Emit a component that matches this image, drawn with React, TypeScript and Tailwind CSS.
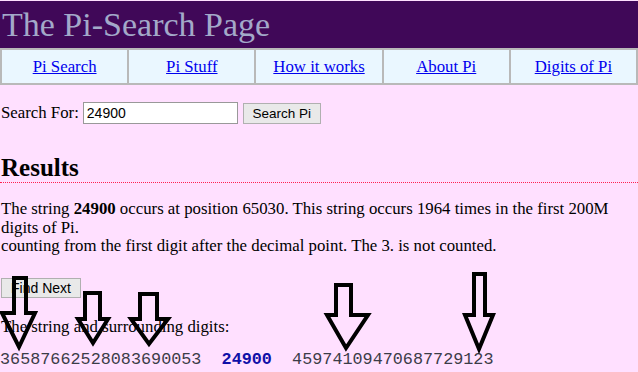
const navLinks = ["Pi Search", "Pi Stuff", "How it works", "About Pi", "Digits of Pi"];

// outlined down arrows drawn over the page: [shaftLeft, shaftRight, top, headY, headLeft, headRight, tipX, tipY]
const arrows: number[][] = [
  [14, 26, 278, 313, 2, 35, 19, 347],
  [85, 100, 293, 319, 78, 108, 93, 343],
  [140, 157, 294, 319, 131, 168, 149, 344],
  [336, 351, 285, 315, 327, 368, 346, 348],
  [474, 485, 274, 315, 465, 493, 479, 349],
];

function arrowPoints(a: number[]) {
  const [x1, x2, y0, y1, h1, h2, tx, ty] = a;
  return `${x1},${y0} ${x2},${y0} ${x2},${y1} ${h2},${y1} ${tx},${ty} ${h1},${y1} ${x1},${y1}`;
}

export default function App() {
  return (
    <div className="relative min-h-screen bg-[#ffe0ff] pt-px font-['Liberation_Serif',serif] text-[16.8px] text-black overflow-hidden">
      <div className="h-[47px] bg-[#400858]">
        <h1 className="pl-[2px] text-[34px] leading-[47px] text-[#a3a9c9]">The Pi-Search Page</h1>
      </div>

      <div className="flex border-2 border-[#b9b9b9] bg-[#eaf7ff]">
        {navLinks.map((label, i) => (
          <div
            key={label}
            className={
              i < navLinks.length - 1
                ? "flex h-[33px] flex-1 items-center justify-center border-r-2 border-[#b9b9b9]"
                : "flex h-[33px] flex-1 items-center justify-center"
            }
          >
            <a href="#" className="text-[#0000ee] underline">
              {label}
            </a>
          </div>
        ))}
      </div>

      <div className="mt-[17px] flex h-[22px] items-center pl-[1px]">
        <span>Search For:</span>
        <input
          className="ml-[4px] h-[22px] w-[155px] border border-[#999] bg-white px-[3px] font-['Liberation_Sans',Arial,sans-serif] text-[14px] text-black"
          defaultValue="24900"
        />
        <button className="ml-[5px] h-[21px] w-[78px] border border-[#b0b0b0] bg-[#e9e9e9] font-['Liberation_Sans',Arial,sans-serif] text-[13.5px] text-black">
          Search Pi
        </button>
      </div>

      <h2 className="mt-[29px] border-b border-dotted border-[#ff2050] pl-[1px] text-[25px] font-bold leading-[29px]">
        Results
      </h2>

      <p className="mt-[17px] pl-[1px] leading-[18.5px]">
        The string <b>24900</b> occurs at position 65030. This string occurs 1964 times in the first 200M digits of Pi.
        <br />
        counting from the first digit after the decimal point. The 3. is not counted.
      </p>

      <button className="mt-[22px] ml-[1px] h-[20px] w-[80px] border border-[#b0b0b0] bg-[#e9e9e9] font-['Liberation_Sans',Arial,sans-serif] text-[14px] leading-[18px] text-black">
        Find Next
      </button>

      <p className="mt-[14px] pl-[1px]">The string and surrounding digits:</p>

      <p className="mt-[11px] whitespace-pre font-['Liberation_Mono','Courier_New',monospace] text-[16.8px] leading-[19px] text-[#3c3c48]">
        36587662528083690053{"  "}
        <b className="text-[#1010a8]">24900</b>
        {"  "}45974109470687729123
      </p>

      <svg className="pointer-events-none absolute left-0 top-0" width={638} height={372}>
        {arrows.map((a, i) => (
          <polygon key={i} points={arrowPoints(a)} fill="none" stroke="#000" strokeWidth={4} strokeLinejoin="miter" />
        ))}
      </svg>
    </div>
  );
}
